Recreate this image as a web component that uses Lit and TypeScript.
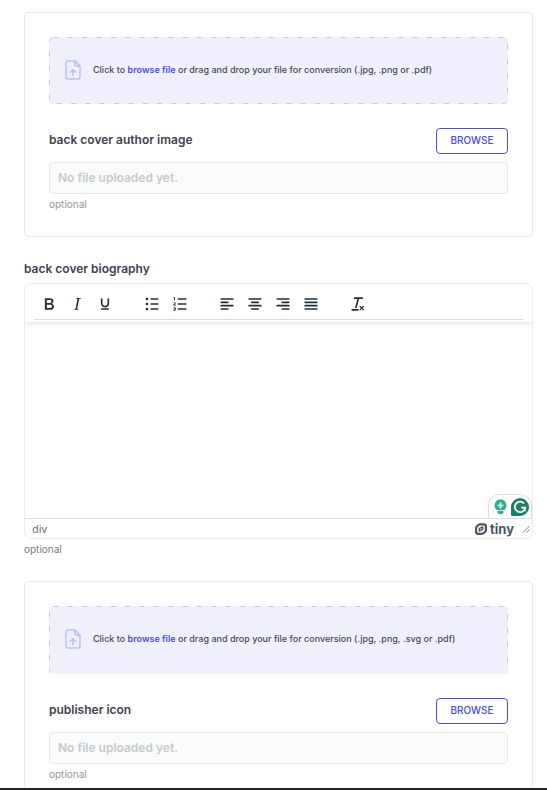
import { LitElement, html, css, svg } from "lit";
import { customElement, property } from "lit/decorators.js";
import { classMap } from "lit/directives/class-map.js";

const bar = (x: number, y: number, w: number) =>
  svg`<rect x=${x} y=${y} width=${w} height="2" rx="1"></rect>`;

const icons = {
  bold: svg`<path d="M7.8 19c-.3 0-.5 0-.6-.2l-.2-.5V5.7c0-.2 0-.4.2-.5l.6-.2h5c1.5 0 2.7.3 3.5 1 .7.6 1.1 1.4 1.1 2.5a3 3 0 0 1-.6 1.9c-.4.6-1 1-1.6 1.2.4.1.9.3 1.3.6s.8.7 1 1.2c.4.4.5 1 .5 1.6 0 1.3-.4 2.3-1.3 3-.8.7-2.1 1-3.8 1H7.8Zm5-8.3c.6 0 1.2-.1 1.6-.5.4-.3.6-.7.6-1.3 0-1.1-.8-1.7-2.3-1.7H9.3v3.5h3.4Zm.5 6c.7 0 1.3-.1 1.7-.4.4-.4.6-.9.6-1.5s-.2-1-.7-1.4c-.4-.3-1-.4-2-.4H9.4v3.8h4Z"></path>`,
  italic: svg`<path d="m16.7 4.7-.1.9h-.3c-.6 0-1 0-1.4.3-.3.3-.4.6-.5 1.1l-2.1 9.8v.6c0 .5.4.8 1.4.8h.2l-.2.8H8l.2-.8h.2c1.1 0 1.8-.5 2-1.5l2-9.8.1-.5c0-.6-.4-.8-1.4-.8h-.3l.2-.9h5.8Z"></path>`,
  underline: svg`<path d="M16 5c.6 0 1 .4 1 1v5.5a4 4 0 0 1-.4 1.8l-1 1.4a5.3 5.3 0 0 1-5.500 1 5 5 0 0 1-1.600-1c-.5-.4-.8-.9-1.100-1.400a4 4 0 0 1-.4-1.800V6c0-.6.4-1 1-1s1 .4 1 1v5.500c0 .3 0 .6.2 1l.6.7a3.300 3.300 0 0 0 2.200.8 3.400 3.400 0 0 0 2.200-.8c.3-.2.4-.5.6-.8l.2-.9V6c0-.6.4-1 1-1ZM8 17h8c.6 0 1 .4 1 1s-.4 1-1 1H8a1 1 0 0 1 0-2Z"></path>`,
  bullets: svg`${bar(10, 5, 10)}${bar(10, 11, 10)}${bar(10, 17, 10)}<circle cx="6" cy="6" r="1.6"></circle><circle cx="6" cy="12" r="1.6"></circle><circle cx="6" cy="18" r="1.6"></circle>`,
  numbers: svg`${bar(9, 5, 11)}${bar(9, 11, 11)}${bar(9, 17, 11)}<path d="M6 4v3.5c0 .3-.2.5-.5.5a.5.5 0 0 1-.5-.5V5h-.5a.5.5 0 0 1 0-1H6Zm-1 8.8.2.2h1.3c.3 0 .5.2.5.5s-.2.5-.5.5H4.9a1 1 0 0 1-.9-1V13c0-.4.3-.8.6-1l1.2-.4.2-.3a.2.2 0 0 0-.2-.2H4.5a.5.5 0 0 1-.5-.5c0-.3.2-.5.5-.5h1.6c.5 0 .9.4.9 1v.1c0 .4-.3.8-.6 1l-1.2.4-.2.3ZM7 17v2c0 .6-.4 1-1 1H4.5a.5.5 0 0 1 0-1h1.2c.2 0 .3-.1.3-.3 0-.2-.1-.3-.3-.3H4.4a.4.4 0 1 1 0-.8h1.3c.2 0 .3-.1.3-.3 0-.2-.1-.3-.3-.3H4.5a.5.5 0 1 1 0-1H6c.6 0 1 .4 1 1Z"></path>`,
  left: svg`${bar(4, 5, 16)}${bar(4, 9, 10)}${bar(4, 13, 16)}${bar(4, 17, 10)}`,
  center: svg`${bar(4, 5, 16)}${bar(7, 9, 10)}${bar(4, 13, 16)}${bar(7, 17, 10)}`,
  right: svg`${bar(4, 5, 16)}${bar(10, 9, 10)}${bar(4, 13, 16)}${bar(10, 17, 10)}`,
  justify: svg`${bar(4, 5, 16)}${bar(4, 9, 16)}${bar(4, 13, 16)}${bar(4, 17, 16)}`,
  clear: svg`<path d="M13.2 6a1 1 0 0 1 0 .2l-2.6 10a1 1 0 0 1-1 .8h-.2a.8.8 0 0 1-.8-1l2.6-10H8a1 1 0 1 1 0-2h9a1 1 0 0 1 0 2h-3.8ZM5 18h7a1 1 0 0 1 0 2H5a1 1 0 0 1 0-2Zm13 1.5L16.5 18 15 19.5a.7.7 0 0 1-1-1l1.5-1.5-1.5-1.5a.7.7 0 0 1 1-1l1.5 1.5 1.5-1.5a.7.7 0 0 1 1 1L17.5 17l1.5 1.5a.7.7 0 0 1-1 1Z"></path>`,
};

const toolbar: [string, unknown][][] = [
  [["Bold", icons.bold], ["Italic", icons.italic], ["Underline", icons.underline]],
  [["Bullet list", icons.bullets], ["Numbered list", icons.numbers]],
  [["Align left", icons.left], ["Align center", icons.center], ["Align right", icons.right], ["Justify", icons.justify]],
  [["Clear formatting", icons.clear]],
];

const shared = css`
  * { box-sizing: border-box; }
  svg { display: block; flex: none; }
  button, input, textarea { font-family: inherit; margin: 0; }
  .label { font-size: 12px; line-height: 16px; font-weight: 600; color: #3f434d; }
  .hint { margin: 4px 0 0; font-size: 10px; line-height: 12px; color: #9297a3; }
`;

/** Card with a drop zone and a read-only file name field. */
@customElement("upload-card")
export class UploadCard extends LitElement {
  @property() heading = "";
  @property() formats = "";
  @property({ type: Boolean }) tall = false;

  static styles = [shared, css`
    :host { display: block; }
    .card { padding: 24px 24px 26px; border: 1px solid #e9e9ec; border-radius: 4px; background: #fff; }
    .drop { position: relative; display: flex; align-items: center; gap: 12px; min-height: 67px; padding: 0 16px 2px; border-radius: 4px; background: #f0f0fd; overflow: hidden; font-size: 9px; font-weight: 500; line-height: 16px; color: #464a57; }
    .drop.tall { min-height: 68px; }
    .dashes { position: absolute; inset: 0; width: 100%; height: 100%; pointer-events: none; }
    .tall .dashes { height: calc(100% + 2px); }
    .edge { width: calc(100% - 1px); height: calc(100% - 1px); }
    .drop a { color: #4a4ce0; font-weight: 600; text-decoration: none; }
    .head { display: flex; align-items: center; justify-content: space-between; margin: 24px 0 8px; }
    .head .label { padding-bottom: 2px; }
    .browse { width: 72px; height: 26px; padding: 0 0 2px; border: 1px solid #4a4ce0; border-radius: 4px; background: #fff; color: #4a4ce0; font-size: 10px; font-weight: 500; }
    .file { display: block; width: 100%; height: 32px; padding: 0 8px 2px; border: 1px solid #e6e9ea; border-radius: 4px; background: #fafcfb; font-size: 12px; font-weight: 600; outline: none; }
    .file::placeholder { color: #c6c9d1; opacity: 1; }
  `];

  render() {
    return html`<section class="card">
      <div class=${classMap({ drop: true, tall: this.tall })}>
        <svg class="dashes" aria-hidden="true">
          <svg x="0.5" y="0.5" width="100%" height="100%" overflow="visible">
            <rect class="edge" rx="4" fill="none" stroke="#c3c4fa" stroke-dasharray="5 9.36"></rect>
          </svg>
        </svg>
        <svg width="16" height="20" viewBox="0 0 16 20" fill="none" stroke="#bcbdf8" stroke-width="1.5" stroke-linejoin="round" stroke-linecap="round" aria-hidden="true">
          <path d="M9.8.9H3A2 2 0 0 0 1 2.9V17.1a2 2 0 0 0 2 2h10a2 2 0 0 0 2-2V6.1L9.8.9v3.3a2 2 0 0 0 2 2H15M8 15.5v-5M5.300 12.300 8 9.700l2.700 2.600"></path>
        </svg>
        <span>Click to <a href="#browse">browse file</a> or drag and drop your file for conversion ${this.formats}</span>
      </div>
      <div class="head">
        <label class="label" for="file">${this.heading}</label>
        <button class="browse" type="button">BROWSE</button>
      </div>
      <input class="file" id="file" type="text" readonly placeholder="No file uploaded yet." />
      <p class="hint">optional</p>
    </section>`;
  }
}

/** Rich text field: toolbar, writing area and status bar. */
@customElement("rich-editor")
export class RichEditor extends LitElement {
  @property() heading = "";

  static styles = [shared, css`
    :host { display: block; padding-bottom: 2px; }
    .label { display: block; margin-bottom: 6px; }
    .editor { border: 1px solid #ececee; border-radius: 8px; background: #fff; overflow: hidden; }
    .tools { position: relative; padding: 0 9px 2px; box-shadow: 0 2px 4px rgba(34, 47, 62, .12); }
    .row { display: flex; gap: 19px; height: 36px; align-items: center; padding: 5px 0 0 1px; border-bottom: 1px solid #dcdde0; }
    .group { display: flex; }
    .tool { display: grid; place-items: center; width: 28px; height: 28px; padding: 0; border: 0; background: none; color: #222f3e; }
    .body { position: relative; }
    .text { display: block; width: 100%; height: 196px; padding: 12px; border: 0; outline: none; resize: none; background: transparent; font-size: 12px; }
    .assist { position: absolute; right: 0; bottom: 0; display: flex; align-items: center; gap: 4px; height: 24px; padding: 1px 2px 0 5px; border: 1px solid #dcdde6; border-bottom: 0; border-radius: 12px 12px 0 0; background: #fff; }
    .status { display: flex; align-items: center; height: 20px; padding: 1px 2px 0 7px; border-top: 1px solid #dcdde0; color: #6b727c; }
    .path { flex: 1; font-family: "Noto Sans", sans-serif; font-size: 11px; line-height: 16px; }
    .brand { display: flex; align-items: center; gap: 3px; margin-right: 8px; color: #4b5563; font-size: 13px; line-height: 16px; font-weight: 700; text-decoration: none; }
    .hint { color: #777c88; }
  `];

  render() {
    return html`
      <label class="label" for="bio">${this.heading}</label>
      <div class="editor">
        <div class="tools"><div class="row" role="toolbar">
          ${toolbar.map((group) => html`<div class="group">${group.map(([name, icon]) => html`
            <button class="tool" type="button" aria-label=${name}>
              <svg width="20" height="20" viewBox="0 0 24 24" fill="currentColor">${icon}</svg>
            </button>`)}</div>`)}
        </div></div>
        <div class="body">
          <textarea class="text" id="bio"></textarea>
          <div class="assist">
            <svg width="13" height="16" viewBox="0 0 13 16">
              <path fill="#27b08b" d="M6.5.5a6 6 0 0 1 3.500 10.800H3A6 6 0 0 1 6.500.5Z"></path>
              <path fill="#fff" d="M5.700 3.500h1.600v2.200h2.200v1.600H7.300v2.200H5.700V7.300H3.500V5.700h2.200Z"></path>
              <path fill="#8a75c9" d="M3.500 12h6v1h-6z"></path>
              <path fill="#27b08b" d="M3.500 13h6a3 2.200 0 0 1-6 0Z"></path>
            </svg>
            <svg width="18" height="18" viewBox="0 0 18 18">
              <path fill="#1c7f68" d="M9 0a9 9 0 1 1 0 18H1.500Q0 18 0 16.500V9a9 9 0 0 1 9-9Z"></path>
              <path fill="none" stroke="#fff" stroke-width="1.8" d="M13 5.500A5.200 5.200 0 1 0 14.200 9.700H10.200M13.800 9.700v3.500"></path>
            </svg>
          </div>
        </div>
        <div class="status">
          <span class="path">div</span>
          <a class="brand" href="#tiny">
            <svg width="12" height="12" viewBox="0 0 12 12" fill="none" stroke="currentColor">
              <path stroke-width="2.200" d="M4.600 1.300H8.800Q10.900 1.300 10.900 3.400V7Q10.900 8.600 9.500 9.400L8 10.400Q7.300 10.900 6.400 10.900H3.200Q1.100 10.900 1.100 8.800V5.200Q1.100 3.700 2.400 2.800L3.600 1.800Q4 1.300 4.600 1.300Z"></path>
              <path stroke-width="1.400" d="M4.400 5.400 7.600 4v2.600L4.400 8Z"></path>
            </svg>tiny</a>
          <svg width="8" height="8" viewBox="0 0 8 8" stroke="#7b818b" stroke-width="1"><path d="M1 7.500 7.500 1M4.500 7.500l3-3"></path></svg>
        </div>
      </div>
      <p class="hint">optional</p>`;
  }
}

@customElement("app-root")
export class AppRoot extends LitElement {
  static styles = css`
    :host { display: flex; flex-direction: column; box-sizing: border-box; height: 100vh; overflow: hidden; border-bottom: 2px solid #222326; background: #fff; font-family: Inter, sans-serif; }
    .form { display: grid; gap: 24px; padding: 12px 14px 12px 24px; }
  `;

  render() {
    return html`<main class="form">
      <upload-card heading="back cover author image" formats="(.jpg, .png or .pdf)"></upload-card>
      <rich-editor heading="back cover biography"></rich-editor>
      <upload-card heading="publisher icon" formats="(.jpg, .png, .svg or .pdf)" tall></upload-card>
    </main>`;
  }
}
